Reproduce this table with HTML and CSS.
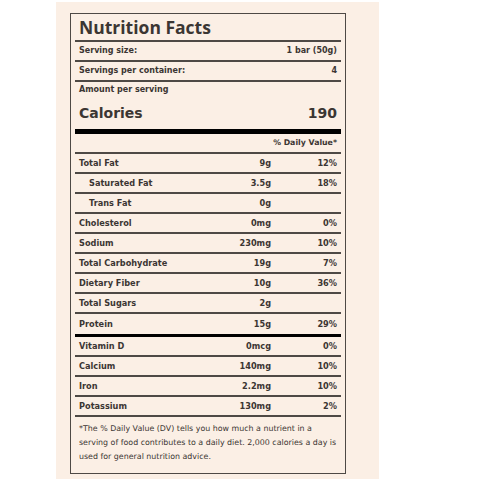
FILE: index.html
```html
<!DOCTYPE html>
<html lang="en">
<head>
  <meta charset="UTF-8" />
  <meta name="viewport" content="width=device-width, initial-scale=1.0"/>
  <title>Nutrition Facts</title>
  <link rel="stylesheet" href="styles.css">
</head>
<body>
  <div class="panel">
    <div class="label">
      <h1 class="title">Nutrition Facts</h1>

      <div class="row"><span>Serving size:</span><span class="val">1 bar (50g)</span></div>
      <div class="row"><span>Servings per container:</span><span class="val">4</span></div>

      <div class="amount">Amount per serving</div>
      <div class="calories"><span>Calories</span><span>190</span></div>

      <div class="dv">% Daily Value*</div>

      <!-- nutrients -->
      <div class="grid-row"><span>Total Fat</span><span class="amt">9g</span><span class="pct">12%</span></div>
      <div class="grid-row sub"><span>Saturated Fat</span><span class="amt">3.5g</span><span class="pct">18%</span></div>
      <div class="grid-row sub"><span>Trans Fat</span><span class="amt">0g</span><span class="pct"></span></div>
      <div class="grid-row"><span>Cholesterol</span><span class="amt">0mg</span><span class="pct">0%</span></div>
      <div class="grid-row"><span>Sodium</span><span class="amt">230mg</span><span class="pct">10%</span></div>
      <div class="grid-row"><span>Total Carbohydrate</span><span class="amt">19g</span><span class="pct">7%</span></div>
      <div class="grid-row"><span>Dietary Fiber</span><span class="amt">10g</span><span class="pct">36%</span></div>
      <div class="grid-row"><span>Total Sugars</span><span class="amt">2g</span><span class="pct"></span></div>
      <div class="grid-row thick"><span>Protein</span><span class="amt">15g</span><span class="pct">29%</span></div>

      <!-- vitamins & minerals -->
      <div class="grid-row"><span>Vitamin D</span><span class="amt">0mcg</span><span class="pct">0%</span></div>
      <div class="grid-row"><span>Calcium</span><span class="amt">140mg</span><span class="pct">10%</span></div>
      <div class="grid-row"><span>Iron</span><span class="amt">2.2mg</span><span class="pct">10%</span></div>
      <div class="grid-row"><span>Potassium</span><span class="amt">130mg</span><span class="pct">2%</span></div>

      <p class="note">*The % Daily Value (DV) tells you how much a nutrient in a<br>serving of food contributes to a daily diet. 2,000 calories a day is<br>used for general nutrition advice.</p>
    </div>
  </div>
</body>
</html>
```

FILE: styles.css
```css
* {
  box-sizing: border-box;
}

body {
  margin: 0;
  font-family: "DejaVu Sans", "Liberation Sans", sans-serif;
  color: #3b3633;
  background: #fff;
}

.panel {
  width: 323px;
  height: 477px;
  margin: 2px 0 0 56px;
  padding: 11px 0 0 14px;
  background: #fbefe5;
}

.label {
  width: 276px;
  height: 461px;
  border: 1.5px solid #4e4945;
  padding: 0 4px;
}

.title {
  margin: 0;
  height: 27.5px;
  padding: 1px 0 0 4px;
  font-family: "Open Sans", "Liberation Sans", sans-serif;
  font-size: 17.5px;
  font-weight: 700;
  line-height: 24px;
  border-bottom: 2px solid #4e4945;
}

.row,
.calories {
  display: flex;
  justify-content: space-between;
  align-items: center;
}

.row {
  height: 20px;
  padding: 0 4px;
  font-size: 8px;
  font-weight: 700;
  border-bottom: 2px solid #4e4945;
}

.amount {
  height: 16px;
  padding: 0 4px;
  font-size: 8px;
  font-weight: 700;
  line-height: 16px;
}

.calories {
  height: 36.7px;
  padding: 0 4px 1px;
  font-size: 14px;
  font-weight: 700;
  border-bottom: 5.3px solid #000;
}

.dv {
  height: 20px;
  padding: 0 4px;
  font-size: 7.8px;
  font-weight: 700;
  line-height: 18px;
  text-align: right;
  border-bottom: 2px solid #4e4945;
}

.grid-row {
  display: grid;
  grid-template-columns: 1fr 60px 66px;
  align-items: center;
  height: 20px;
  padding: 0 4px;
  font-size: 8.2px;
  font-weight: 700;
  border-bottom: 2px solid #4e4945;
}

.grid-row.thick {
  height: 22.6px;
  border-bottom: 3.4px solid #000;
}

.sub {
  padding-left: 14px;
}

.amt,
.pct {
  text-align: right;
}

.note {
  margin: 5px 0 0;
  padding: 0 0 0 4px;
  font-size: 7.9px;
  line-height: 14px;
  white-space: nowrap;
}
```
